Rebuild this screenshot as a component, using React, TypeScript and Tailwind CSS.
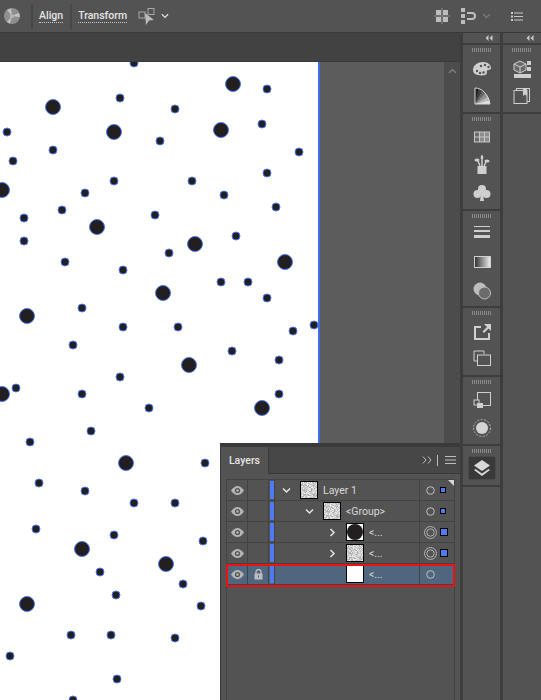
import React from "react";

const dots: [number, number, number][] = [
[134,63,4.5],[53,107,8],[120,98,4.5],[175,109,4.5],[233,84,8],[267,89,4.5],[7,132,4.5],[114,132,8],[221,130,8],[262,124,4.5],[53,150,4.5],[160,141,4.5],[299,152,4.5],[13,161,4.5],[114,181,4.5],[192,181,4.5],[267,173,4.5],[2,190,8],[85,193,4.5],[224,195,4.5],[276,207,4.5],[62,210,4.5],[155,215,4.5],[24,218,4.5],[97,227,8],[236,236,4.5],[24,241,4.5],[195,244,8],[169,253,4.5],[65,262,4.5],[285,262,8],[123,270,4.5],[221,282,4.5],[248,282,4.5],[163,293,8],[267,298,4.5],[82,308,4.5],[27,316,8],[123,327,4.5],[178,327,4.5],[293,331,4.5],[314,325,4.5],[73,345,4.5],[232,351,4.5],[189,365,8],[279,360,4.5],[120,377,4.5],[16,388,4.5],[2,394,8],[82,394,4.5],[279,394,4.5],[149,408,4.5],[262,408,8],[91,431,4.5],[30,442,4.5],[126,463,8],[205,463,4.5],[39,483,4.5],[85,491,4.5],[175,503,4.5],[134,503,4.5],[36,529,4.5],[114,535,4.5],[203,541,4.5],[82,549,8],[166,564,8],[100,572,4.5],[183,584,4.5],[116,595,4.5],[27,604,8],[201,606,4.5],[71,635,4.5],[111,635,4.5],[175,638,4.5],[10,656,4.5],[117,679,4.5],[73,700,4.5],
];

const noise: [number, number, number][] = (() => {
  const out: [number, number, number][] = [];
  let s = 7;
  for (let y = 0; y < 16; y++) for (let x = 0; x < 16; x++) {
    s = (s * 1103515245 + 12345) & 0x7fffffff;
    const v = (s >> 16) % 5;
    out.push([x, y, [175, 190, 205, 218, 235][v]]);
  }
  return out;
})();

function Thumb({ kind }: { kind: "noise" | "dot" | "white" }) {
  return (
    <div className="w-[18px] h-[18px] border border-black bg-white shrink-0 overflow-hidden">
      {kind === "noise" && (
        <svg width="16" height="16" viewBox="0 0 16 16" shapeRendering="crispEdges">
          {noise.map(([a, b, c], i) => (
            <rect key={i} x={a} y={b} width="1" height="1" fill={`rgb(${c},${c},${c})`} />
          ))}
        </svg>
      )}
      {kind === "dot" && (
        <svg width="16" height="16" viewBox="0 0 16 16"><circle cx="8" cy="8" r="8" fill="#231f20" /></svg>
      )}
    </div>
  );
}

function Eye() {
  return (
    <svg width="13" height="9" viewBox="0 0 13 9">
      <path d="M0 4.500C2 1.500 4.200 0 6.500 0S11 1.500 13 4.500C11 7.500 8.800 9 6.500 9S2 7.500 0 4.500Z" fill="#b4b4b4" />
      <circle cx="6.500" cy="4.500" r="2.600" fill="#535353" />
      <circle cx="6.500" cy="4.500" r="1.300" fill="#b4b4b4" />
    </svg>
  );
}

function Lock() {
  return (
    <svg width="9" height="11" viewBox="0 0 9 11">
      <path d="M2 5V3a2.500 2.500 0 0 1 5 0v2" fill="none" stroke="#bdbdbd" strokeWidth="1.300" />
      <rect x="0.500" y="4.500" width="8" height="6" fill="#bdbdbd" />
      <rect x="4" y="6.500" width="1" height="2" fill="#50667e" />
    </svg>
  );
}

function Chev({ down }: { down?: boolean }) {
  return (
    <svg width="9" height="9" viewBox="0 0 9 9">
      <path d={down ? "M1 2.500L4.500 6L8 2.500" : "M2.500 1L6 4.500L2.500 8"} fill="none" stroke="#e4e4e4" strokeWidth="1.500" />
    </svg>
  );
}

function Target({ double }: { double?: boolean }) {
  return double ? (
    <svg width="13" height="13" viewBox="0 0 13 13">
      <circle cx="6.500" cy="6.500" r="6" fill="none" stroke="#b0b0b0" />
      <circle cx="6.500" cy="6.500" r="3.700" fill="none" stroke="#b0b0b0" />
    </svg>
  ) : (
    <svg width="9" height="9" viewBox="0 0 9 9">
      <circle cx="4.500" cy="4.500" r="3.800" fill="none" stroke="#c0c0c0" />
    </svg>
  );
}

type RowProps = {
  indent: number;
  chev?: "down" | "right";
  thumb: "noise" | "dot" | "white";
  label: string;
  double?: boolean;
  square?: number;
  selected?: boolean;
  lock?: boolean;
};

function Row({ indent, chev, thumb, label, double, square, selected, lock }: RowProps) {
  return (
    <div className={`h-[21px] flex items-center border-b border-[#434343] ${selected ? "bg-[#50667e]" : ""}`}>
      <div className="w-[20px] flex justify-center shrink-0"><Eye /></div>
      <div className="w-[22px] h-full flex items-center justify-center border-x border-[#434343] shrink-0">{lock && <Lock />}</div>
      <div className="w-[4px] h-[18px] bg-[#4f7bf0] ml-[1px] shrink-0" />
      <div className="flex-1 flex items-center h-full min-w-0 border-l border-[#434343]" style={{ paddingLeft: indent }}>
        <div className="w-[14px] flex justify-center shrink-0">{chev && <Chev down={chev === "down"} />}</div>
        <div className="ml-[7px]"><Thumb kind={thumb} /></div>
        <span className="ml-[5px] mt-[2px] text-[10.500px] leading-none text-[#d8d8d8] whitespace-nowrap font-['Roboto',sans-serif]">{label}</span>
      </div>
      <div className="w-[35px] h-full flex items-center border-l border-[#434343] shrink-0 pl-[3px]">
        <div className="w-[15px] flex justify-center"><Target double={double} /></div>
        {square ? (
          <div className={`ml-[2px] bg-[#4f7bf0] border border-black ${square === 2 ? "w-[8px] h-[8px]" : "w-[6px] h-[6px]"}`} />
        ) : null}
      </div>
    </div>
  );
}

function Grip() {
  return <div className="w-[20px] h-[4px] mb-[1px] mx-auto bg-[repeating-linear-gradient(90deg,#8a8a8a_0,#8a8a8a_1px,transparent_1px,transparent_2px)]" />;
}

function Ico({ children, h = 26 }: { children: React.ReactNode; h?: number }) {
  return (
    <div className="flex justify-center items-center" style={{ height: h }}>
      <svg className="shrink-0" width="20" height="20" viewBox="0 0 20 20">{children}</svg>
    </div>
  );
}

const DockGroup = ({ children, cls }: { children: React.ReactNode; cls: string }) => (
  <div className={`shrink-0 border-b-2 border-[#3d3d3d] pt-[3px] ${cls}`}>
    <Grip />
    {children}
  </div>
);

const Collapse = () => (
  <div className="h-[12px] shrink-0 border-b-2 border-[#3d3d3d] flex items-center justify-end pr-[7px]">
    <svg width="8" height="6" viewBox="0 0 8 6">
      <path d="M3.500 0V6L0.500 3ZM7.500 0V6L4.500 3Z" fill="#c8c8c8" />
    </svg>
  </div>
);

export default function App() {
  return (
    <div className="w-[541px] h-[700px] overflow-hidden relative bg-[#535353] flex flex-col font-['Roboto',sans-serif]">
      {/* control bar */}
      <div className="h-[33px] shrink-0 bg-[#535353] border-b border-[#3a3a3a] flex items-center">
        <svg className="ml-[4px]" width="16" height="16" viewBox="0 0 16 16">
          <circle cx="8" cy="8" r="8" fill="#8f8f8f" />
          <path d="M8 8L3 2L7 0.500ZM8 8L15 5L15.800 9ZM8 8L6 15.500L3 14Z" fill="#c4c4c4" />
          <circle cx="8" cy="8" r="2" fill="#b5b5b5" />
        </svg>
        <div className="ml-[11px] w-[2px] h-[25px] bg-[#484848]" />
        <span className="ml-[6px] text-[10.500px] leading-[13px] font-medium text-[#e6e6e6] border-b border-dotted border-[#c8c8c8]">Align</span>
        <div className="ml-[7px] w-[2px] h-[25px] bg-[#484848]" />
        <span className="ml-[6px] text-[10.500px] leading-[13px] font-medium text-[#e6e6e6] border-b border-dotted border-[#c8c8c8]">Transform</span>
        <svg className="ml-[11px]" width="17" height="17" viewBox="0 0 17 17">
          <rect x="1" y="4" width="6" height="6" fill="none" stroke="#a8a8a8" />
          <rect x="10" y="0.500" width="6" height="6" fill="none" stroke="#a8a8a8" />
          <path d="M7 5L16 12L11 12.500L8 17Z" fill="#bcbcbc" />
        </svg>
        <svg className="ml-[6px]" width="8" height="6" viewBox="0 0 9 6">
          <path d="M1 1L4.500 4.500L8 1" fill="none" stroke="#e0e0e0" strokeWidth="1.400" />
        </svg>
        <div className="ml-auto mr-[18px] flex items-center">
          <svg width="16" height="16" viewBox="0 0 16 16">
            <path d="M2 2H7V7H2ZM9 2H14V7H9ZM2 9H7V14H2ZM9 9H14V14H9Z" fill="#bdbdbd" />
            <path d="M0 8H16M8 0V16" stroke="#8a8a8a" />
          </svg>
          <svg className="ml-[11px]" width="15" height="16" viewBox="0 0 15 16">
            <path d="M0 0H4V4H0ZM0 6H4V10H0ZM0 12H4V16H0Z" fill="#bdbdbd" />
            <path d="M6 5H11A3 3 0 0 1 11 11H6" fill="none" stroke="#bdbdbd" strokeWidth="2" />
          </svg>
          <svg className="ml-[6px]" width="9" height="6" viewBox="0 0 9 6">
            <path d="M1 1L4.500 4.500L8 1" fill="none" stroke="#787878" strokeWidth="1.400" />
          </svg>
          <svg className="ml-[20px]" width="12" height="9" viewBox="0 0 12 9">
            <path d="M0 0H2V2H0ZM0 3.500H2V5.500H0ZM0 7H2V9H0Z" fill="#c8c8c8" />
            <path d="M3 1H12M3 4.500H12M3 8H12" stroke="#c8c8c8" />
          </svg>
        </div>
      </div>

      <div className="flex-1 flex min-h-0">
        {/* document area */}
        <div className="w-[463px] shrink-0 flex flex-col border-r-[3px] border-[#3d3d3d] relative">
          <div className="h-[29px] shrink-0 bg-[#424242] border-b border-[#3a3a3a]" />
          <div className="flex-1 flex min-h-0">
            <div className="w-[320px] shrink-0 bg-white border-r-2 border-[#3f6fe8]" />
            <div className="flex-1 bg-[#5c5c5c]" />
            <div className="w-[16px] shrink-0 bg-[#4c4c4c] flex justify-center pt-[6px]">
              <svg width="9" height="6" viewBox="0 0 9 6">
                <path d="M1 5L4.500 1.500L8 5" fill="none" stroke="#7c7c7c" strokeWidth="1.500" />
              </svg>
            </div>
          </div>
        </div>

        {/* dock col 1 */}
        <div className="w-[40px] shrink-0 border-r-[3px] border-[#3d3d3d] flex flex-col">
          <Collapse />
          <DockGroup cls="h-[69px]">
            <Ico h={32}>
              <path d="M1 11C1 6 6 3 11 3S19 6 19 9C19 11 16 11 15 11.500C14 12.500 16 14 14 15.500C12 17 5 16.500 3 15C2 14 1 13 1 11Z" fill="#cfcfcf" />
              <circle cx="5" cy="12" r="1.200" fill="#535353" /><circle cx="8" cy="14" r="1.200" fill="#535353" /><circle cx="11.500" cy="13.500" r="1.200" fill="#535353" /><circle cx="9" cy="7" r="1.200" fill="#535353" /><circle cx="13" cy="6" r="1.200" fill="#535353" /><circle cx="16.500" cy="8" r="1.200" fill="#535353" />
            </Ico>
            <Ico h={22}>
              <path d="M3 18V2L7 2.600Z" fill="#1f1f1f" />
              <path d="M3 18L7 2.600L10.500 4.500Z" fill="#3f3f3f" />
              <path d="M3 18L10.500 4.500L13.500 7Z" fill="#666" />
              <path d="M3 18L13.500 7L16 10.500Z" fill="#8f8f8f" />
              <path d="M3 18L16 10.500L17.500 14Z" fill="#b8b8b8" />
              <path d="M3 18L17.500 14L18 18Z" fill="#dedede" />
              <path d="M3 2C10 2 16 8 18 18H3Z" fill="none" stroke="#d8d8d8" />
            </Ico>
          </DockGroup>
          <DockGroup cls="h-[97px]">
            <Ico h={30}>
              <rect x="2" y="4.500" width="16" height="11" fill="#c8c8c8" />
              <path d="M3 5.500H7V9.500H3ZM3 10.500H7V14.500H3Z" fill="#6a6a6a" />
              <path d="M8 5.500H12V9.500H8ZM13 10.500H17V14.500H13ZM13 5.500H17V9.500H13ZM8 10.500H12V14.500H8Z" fill="#8c8c8c" />
            </Ico>
            <Ico h={26}>
              <path d="M5.500 11H14.500V19H5.500Z" fill="#cfcfcf" />
              <path d="M8 11L6 6M10 11V5M12 11L14 7" stroke="#cfcfcf" strokeWidth="1.500" />
              <ellipse cx="5" cy="5" rx="2.500" ry="1.500" fill="#cfcfcf" /><ellipse cx="10" cy="2.500" rx="1.300" ry="2.500" fill="#cfcfcf" /><ellipse cx="15" cy="6" rx="2.500" ry="1.500" fill="#cfcfcf" />
            </Ico>
            <Ico h={30}>
              <circle cx="10" cy="6" r="4" fill="#cfcfcf" /><circle cx="5.500" cy="11" r="4" fill="#cfcfcf" /><circle cx="14.500" cy="11" r="4" fill="#cfcfcf" /><path d="M9 10H11L12 18H8Z" fill="#cfcfcf" />
            </Ico>
          </DockGroup>
          <DockGroup cls="h-[97px]">
            <Ico h={28}>
              <path d="M2 3.500H18" stroke="#cfcfcf" /><path d="M2 8H18" stroke="#cfcfcf" strokeWidth="2" /><path d="M2 13.500H18" stroke="#cfcfcf" strokeWidth="3" />
            </Ico>
            <Ico h={30}>
              <defs><linearGradient id="g1"><stop offset="0" stopColor="#2e2e2e" /><stop offset="1" stopColor="#f0f0f0" /></linearGradient></defs>
              <rect x="2.500" y="4.500" width="16" height="11" fill="url(#g1)" stroke="#cfcfcf" />
            </Ico>
            <Ico h={28}>
              <circle cx="8" cy="8" r="6.500" fill="#bdbdbd" />
              <circle cx="12.500" cy="12" r="6" fill="#6b6b6b" stroke="#c0c0c0" />
            </Ico>
          </DockGroup>
          <DockGroup cls="h-[69px]">
            <Ico h={32}>
              <path d="M9 5H3V17H17V11" fill="none" stroke="#cfcfcf" strokeWidth="2" />
              <path d="M12 2H19V9L16.500 6.500L12 11L10.500 9.500L15 5Z" fill="#cfcfcf" />
            </Ico>
            <Ico h={22}>
              <path d="M12 5V2H2V12H5" fill="none" stroke="#cfcfcf" /><rect x="5.500" y="6" width="13" height="10.500" fill="none" stroke="#cfcfcf" />
            </Ico>
          </DockGroup>
          <DockGroup cls="h-[69px]">
            <Ico h={30}>
              <rect x="5.500" y="2.500" width="13" height="13" fill="none" stroke="#cfcfcf" />
              <rect x="2" y="10" width="5" height="5" fill="#535353" stroke="#cfcfcf" /><rect x="5" y="13" width="6" height="5" fill="#cfcfcf" />
            </Ico>
            <Ico h={26}>
              <circle cx="10" cy="10" r="6" fill="#d4d4d4" />
              <circle cx="10" cy="10" r="8.500" fill="none" stroke="#b0b0b0" strokeDasharray="2 1.500" />
            </Ico>
          </DockGroup>
          <DockGroup cls="h-[41px]">
            <div className="mt-[3px] mx-auto w-[28px] h-[24px] rounded-[2px] bg-[#393939] border border-[#4a4a4a] flex items-center justify-center">
              <svg width="18" height="18" viewBox="0 0 18 18">
                <path d="M9 1L17 6.500L9 12L1 6.500Z" fill="#d8d8d8" />
                <path d="M2.500 10L1 11L9 17L17 11L15.500 10L9 14.500Z" fill="#d8d8d8" />
              </svg>
            </div>
          </DockGroup>
        </div>

        {/* dock col 2 */}
        <div className="flex-1 flex flex-col">
          <Collapse />
          <DockGroup cls="h-[69px]">
            <Ico h={32}>
              <path d="M8 2L14 5V11L8 14L2 11V5Z" fill="#6a6a6a" stroke="#cfcfcf" /><path d="M2 5L8 8L14 5M8 8V14" fill="none" stroke="#cfcfcf" />
              <rect x="15" y="2" width="4" height="4" fill="#cfcfcf" /><rect x="15" y="8" width="4" height="4" fill="#cfcfcf" /><rect x="2" y="15" width="17" height="4" fill="#cfcfcf" />
            </Ico>
            <Ico h={22}>
              <rect x="4.500" y="2.500" width="13" height="13" fill="#535353" stroke="#cfcfcf" />
              <rect x="2" y="4.500" width="13" height="13" fill="#535353" stroke="#cfcfcf" strokeWidth="1" />
              <path d="M11 3H15V10L13 8.500L11 10Z" fill="#cfcfcf" />
            </Ico>
          </DockGroup>
        </div>
      </div>

      {/* artwork dots, laid over the white canvas */}
      <svg className="absolute left-0 top-[62px]" width="320" height="638" viewBox="0 62 320 638">
        {dots.map(([x, y, r], i) => (
          <circle key={i} cx={x} cy={y} r={r - 0.5} fill="#231f20" stroke="#4a78f0" strokeWidth="1" />
        ))}
      </svg>

      {/* floating Layers panel */}
      <div className="absolute left-[220px] top-[443px] w-[240px] h-[257px] bg-[#535353] border-t-4 border-l border-[#3a3a3a] flex flex-col">
        <div className="h-[27px] shrink-0 bg-[#474747] border-b border-[#3a3a3a] flex items-center">
          <div className="w-[48px] h-[27px] pt-[2px] bg-[#535353] border-r border-[#3a3a3a] flex items-center justify-center text-[10.500px] font-medium text-[#e4e4e4]">Layers</div>
          <div className="ml-auto flex items-center mr-[4px]">
            <svg width="10" height="8" viewBox="0 0 10 8">
              <path d="M1 0.500L4 4L1 7.500M6 0.500L9 4L6 7.500" fill="none" stroke="#bdbdbd" />
            </svg>
            <div className="ml-[5px] w-px h-[11px] bg-[#bdbdbd]" />
            <svg className="ml-[7px]" width="11" height="8" viewBox="0 0 11 8">
              <path d="M0 0.500H11M0 4H11M0 7.500H11" stroke="#bdbdbd" />
            </svg>
          </div>
        </div>
        <div className="ml-[5px] mr-[5px] mt-[5px] flex-1 border-x border-t border-[#434343] relative">
          <Row indent={4} chev="down" thumb="noise" label="Layer 1" square={1} />
          <Row indent={27} chev="down" thumb="noise" label="<Group>" square={1} />
          <Row indent={50} chev="right" thumb="dot" label="<..." double square={2} />
          <Row indent={50} chev="right" thumb="noise" label="<..." double square={2} />
          <Row indent={50} thumb="white" label="<..." selected lock />
          <div className="absolute right-0 top-0 w-0 h-0 border-t-[6px] border-l-[6px] border-t-[#d8d8d8] border-l-transparent" />
          <div className="absolute left-[-1px] right-[-1px] top-[84px] h-[23px] border-2 border-[#ee1111]" />
        </div>
      </div>
    </div>
  );
}
